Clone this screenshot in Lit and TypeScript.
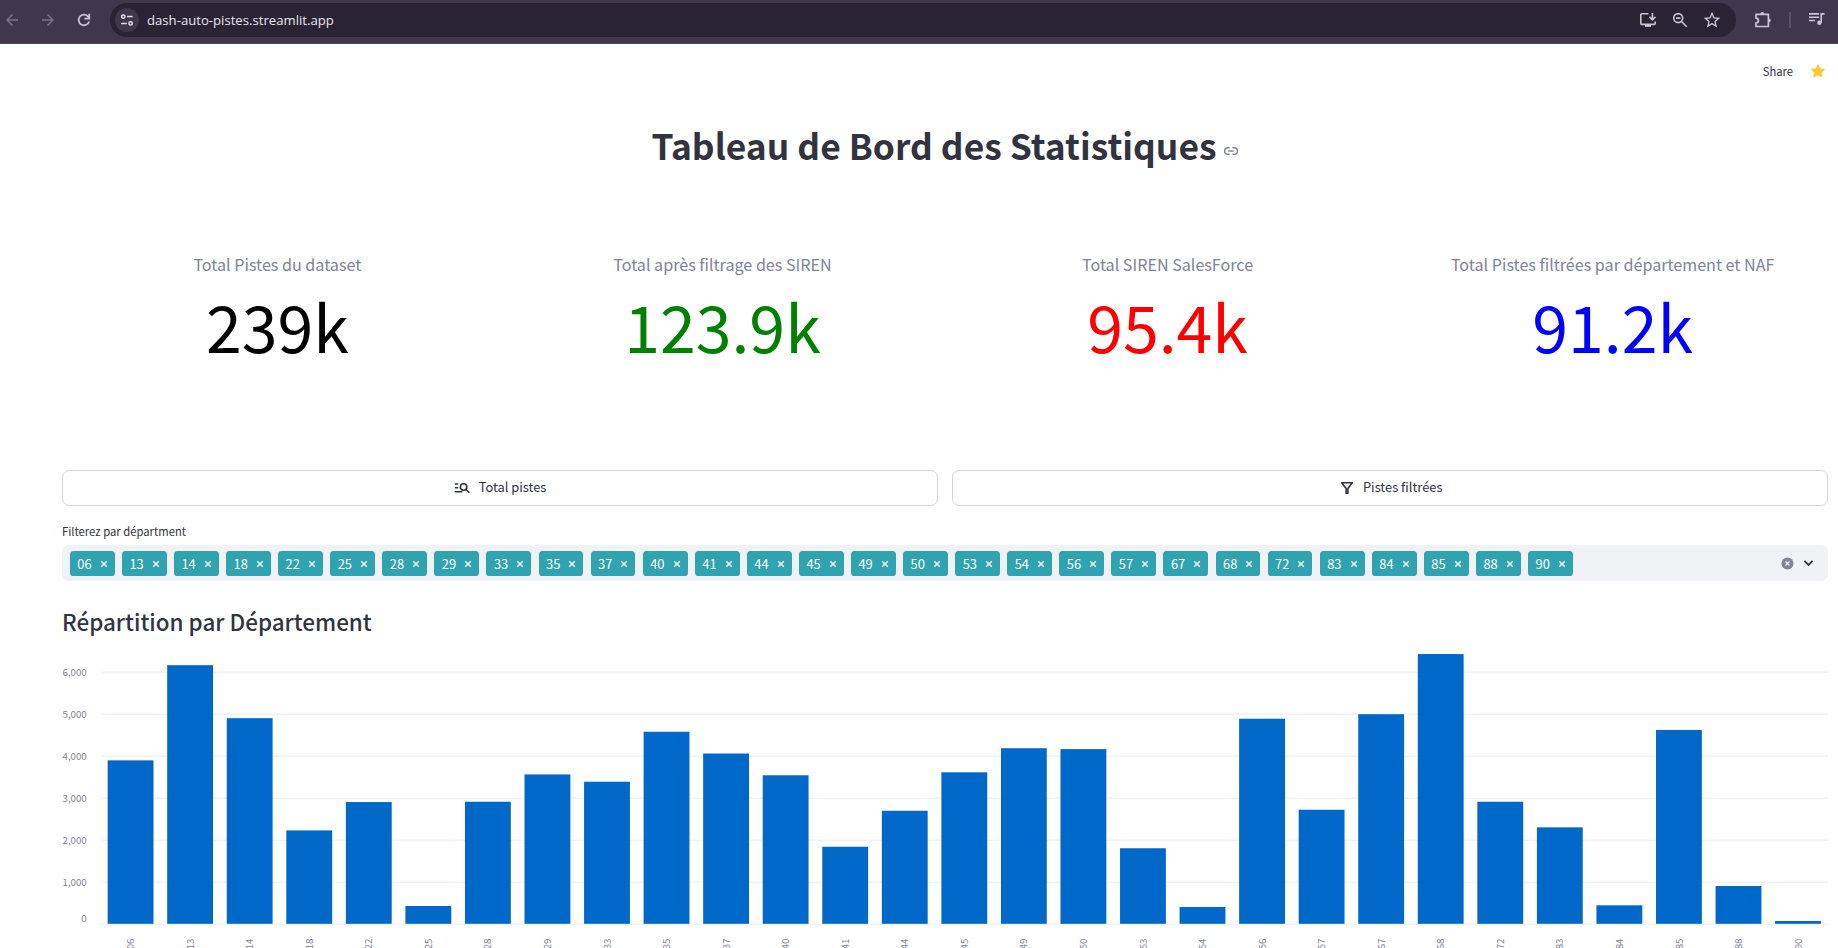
import { LitElement, html, css, svg } from "lit";
import { customElement, property } from "lit/decorators.js";

const DEPARTMENTS: Array<[string, number]> = [
  ["06", 3901], ["13", 6167], ["14", 4905], ["18", 2233], ["22", 2908],
  ["25", 433], ["28", 2916], ["29", 3566], ["33", 3392], ["35", 4582],
  ["37", 4064], ["40", 3546], ["41", 1844], ["44", 2701], ["45", 3617],
  ["49", 4190], ["50", 4169], ["53", 1808], ["54", 409], ["56", 4892],
  ["57", 2725], ["67", 5000], ["68", 6432], ["72", 2916], ["83", 2306],
  ["84", 450], ["85", 4625], ["88", 909], ["90", 77],
];

@customElement("browser-bar")
class BrowserBar extends LitElement {
  static styles = css`
    :host {
      display: flex;
      align-items: flex-start;
      height: 44px;
      box-sizing: border-box;
      padding-top: 3px;
      background: #40374c;
      border-bottom: 1px solid #4b4257;
      color: #cbc2dc;
      font-family: "Open Sans", "Noto Sans", sans-serif;
    }
    svg { display: block; flex: none; }
    .nav {
      display: flex;
      align-items: center;
      width: 110px;
      height: 34px;
      gap: 18px;
      padding-left: 3px;
      box-sizing: border-box;
    }
    .dim { color: #7b7189; }
    .address {
      display: flex;
      align-items: center;
      width: 1626px;
      height: 34px;
      box-sizing: border-box;
      padding: 0 14px 0 5px;
      border-radius: 17px;
      background: #2a2333;
      color: #c9c5cf;
    }
    .site {
      display: grid;
      place-items: center;
      width: 24px;
      height: 24px;
      border-radius: 50%;
      background: #40374c;
      color: #e4dfea;
    }
    .url {
      flex: 1;
      margin-left: 8px;
      color: #e8e4ee;
      font-size: 13.15px;
      line-height: 20px;
    }
    .actions { display: flex; gap: 12px; align-items: center; }
    .tools {
      display: flex;
      align-items: center;
      height: 34px;
      padding-left: 17px;
      gap: 16px;
    }
    .rule { width: 2px; height: 16px; background: #5a5068; }
  `;
  render() {
    return html`
      <div class="nav">
        <svg class="dim" width="18" height="18" viewBox="0 0 24 24" fill="currentColor"><path d="M20 11H7.83l5.59-5.59L12 4l-8 8 8 8 1.41-1.41L7.83 13H20z"/></svg>
        <svg class="dim" width="18" height="18" viewBox="0 0 24 24" fill="currentColor"><path d="M4 13h12.17l-5.59 5.59L12 20l8-8-8-8-1.41 1.41L16.17 11H4z"/></svg>
        <svg width="18" height="18" viewBox="0 0 18 18" fill="none" stroke="currentColor" stroke-width="1.7"><path d="M14.1 10.4A5.3 5.3 0 1 1 12.9 5.4L14.4 7.2M14.3 2.8v4.9H9.4"/></svg>
      </div>
      <div class="address">
        <div class="site">
          <svg width="14" height="14" viewBox="0 0 14 14" fill="none" stroke="currentColor" stroke-width="1.5">
            <circle cx="3.3" cy="3.6" r="1.7"/><path d="M7 3.6h5.6M1.2 10.4h5.6"/><circle cx="10.6" cy="10.4" r="1.7"/>
          </svg>
        </div>
        <div class="url">dash-auto-pistes.streamlit.app</div>
        <div class="actions">
          <svg width="20" height="20" viewBox="0 0 20 20" fill="none" stroke="currentColor" stroke-width="1.6">
            <path d="M10.4 3.8H3.6a.8.8 0 0 0-.8.8v9a.8.8 0 0 0 .8.8h12.8a.8.8 0 0 0 .8-.8v-2.2"/><path d="M14.4 3v6.6M11.4 6.9l3 3 3-3"/><path d="M7 15.8h6" stroke-width="2.2"/>
          </svg>
          <svg width="20" height="20" viewBox="0 0 20 20" fill="none" stroke="currentColor" stroke-width="1.6">
            <circle cx="8.2" cy="8.1" r="4.5"/><path d="M11.5 11.5l5.2 5.2M6 8.1h4.4"/>
          </svg>
          <svg width="20" height="20" viewBox="0 0 24 24" fill="currentColor"><path d="M22 9.24l-7.19-.62L12 2 9.19 8.63 2 9.24l5.46 4.73L5.82 21 12 17.27 18.18 21l-1.63-7.03L22 9.24zM12 15.4l-3.76 2.27 1-4.28-3.32-2.88 4.38-.38L12 6.1l1.71 4.04 4.38.38-3.32 2.88 1 4.28L12 15.4z"/></svg>
        </div>
      </div>
      <div class="tools">
        <svg width="20" height="20" viewBox="0 0 20 20" fill="none" stroke="currentColor" stroke-width="1.7" stroke-linejoin="round">
          <path d="M3 4.3h12.4v12.2H3v-3.6a2.4 2.4 0 0 0 0-4.8z"/><path d="M7.4 4a1.9 1.9 0 0 1 3.8 0zM15.8 8.4a1.9 1.9 0 0 1 0 3.8z" fill="currentColor" stroke="none"/>
        </svg>
        <div class="rule"></div>
        <svg width="20" height="20" viewBox="0 0 20 20" fill="none" stroke="currentColor" stroke-width="1.6">
          <path d="M2 3.9h10M2 7.2h10M2 10.5h6"/><path d="M14.2 12.5V3.9h3.4"/><circle cx="12.4" cy="12.7" r="2.2" fill="currentColor" stroke="none"/>
        </svg>
      </div>`;
  }
}

@customElement("metric-card")
class MetricCard extends LitElement {
  @property() label = "";
  @property() value = "";
  static styles = css`
    :host { display: block; flex: 1; text-align: center; white-space: nowrap; }
    .label { color: #808495; font-size: 16.12px; line-height: 28px; }
    .value { margin-top: 3px; font-size: 64.45px; line-height: 88px; }
  `;
  render() {
    return html`<div class="label">${this.label}</div><div class="value">${this.value}</div>`;
  }
}

@customElement("bar-chart")
class BarChart extends LitElement {
  static styles = css`
    :host { display: block; }
    svg { display: block; }
    .grid { stroke: #e9ebf3; stroke-width: 0.9; }
    .bar { fill: #0068c9; }
    .tick { fill: #808495; font-size: 9.67px; text-anchor: end; }
  `;
  render() {
    const base = 274.2;
    const unit = 0.042;
    const left = 39;
    const step = 1727 / DEPARTMENTS.length;
    const width = 45.85;
    const ticks = [0, 1000, 2000, 3000, 4000, 5000, 6000];
    return html`<svg width="1766" height="298" viewBox="0 0 1766 298">
      ${ticks.map((t) => {
        const y = base - t * unit;
        return svg`<line class="grid" x1=${left} x2="1766" y1=${y} y2=${y}></line>
          <text class="tick" x="24.7" y=${t ? y + 4 : y - 2.4}>${t.toLocaleString("en-US")}</text>`;
      })}
      ${DEPARTMENTS.map(([code, v], i) => {
        const x = left + i * step + (step - width) / 2 - 0.2;
        const c = x + width / 2 + 3.6;
        return svg`<rect class="bar" x=${x} y=${base - v * unit} width=${width} height=${v * unit - 0.4}></rect>
          <text class="tick" x=${c} y="288.6" transform="rotate(-90 ${c} 288.6)">${code}</text>`;
      })}
    </svg>`;
  }
}

@customElement("app-root")
class AppRoot extends LitElement {
  static styles = css`
    :host {
      display: block;
      height: 948px;
      overflow: hidden;
      background: #fff;
      color: #31333f;
      font-family: "Noto Sans CJK JP", "Open Sans", sans-serif;
    }
    svg { display: block; flex: none; }
    .toolbar {
      display: flex;
      justify-content: flex-end;
      align-items: center;
      height: 54px;
      padding-right: 12px;
      gap: 17px;
      font-size: 11.2px;
      line-height: 18px;
    }
    .share { padding-bottom: 1px; }
    .page { padding: 0 10px 0 62px; }
    .title {
      display: flex;
      justify-content: center;
      align-items: center;
      gap: 6px;
      height: 92px;
      margin: 0;
      font-size: 35.4px;
      font-weight: 700;
      line-height: 48px;
    }
    .title span { padding-top: 2px; }
    .title svg { margin-top: 13px; color: #808495; }
    .metrics { display: flex; gap: 14.4px; height: 220px; padding-top: 60px; box-sizing: border-box; }
    .black { color: #000; }
    .green { color: #008000; }
    .red { color: #f00; }
    .blue { color: #00f; }
    .metrics .black, .metrics .green, .metrics .red, .metrics .blue { min-width: 0; }
    .buttons { display: flex; gap: 14.4px; margin-top: 60px; }
    .button {
      flex: 1;
      display: flex;
      justify-content: center;
      align-items: center;
      gap: 7.2px;
      height: 36px;
      box-sizing: border-box;
      border: 1px solid #d6d6d9;
      border-radius: 7.2px;
      font-size: 12.89px;
      line-height: 20px;
    }
    .button span { padding-bottom: 3px; }
    .field { margin-top: 16px; font-size: 11.28px; line-height: 19px; }
    .select {
      display: flex;
      align-items: center;
      height: 36px;
      margin-top: 4px;
      padding: 0 14px 0 7.8px;
      box-sizing: border-box;
      border-radius: 7.2px;
      background: #f0f2f6;
    }
    .chips { flex: 1; display: flex; gap: 7.2px; }
    .chip {
      display: flex;
      align-items: center;
      justify-content: space-between;
      width: 44.9px;
      height: 25px;
      box-sizing: border-box;
      padding: 1px 7px 0 7.5px;
      border-radius: 3.6px;
      background: #30a3b0;
      color: #fff;
      font-size: 12.89px;
      line-height: 24px;
    }
    .controls { display: flex; align-items: center; gap: 9px; }
    .subtitle { margin: 25px 0 0; font-size: 22.45px; font-weight: 500; line-height: 30px; }
    .chart { margin-top: 14px; }
  `;
  render() {
    return html`
      <browser-bar></browser-bar>
      <div class="toolbar">
        <span class="share">Share</span>
        <svg width="16" height="16" viewBox="0 0 16 16" fill="#fbca2c" stroke="#fbca2c" stroke-width="1.3" stroke-linejoin="round"><path d="M8 2l1.8 3.9 4.3.5-3.2 2.9.9 4.3L8 11.5l-3.8 2.1.9-4.3-3.2-2.9 4.3-.5z"/></svg>
      </div>
      <div class="page">
        <h1 class="title">
          <span>Tableau de Bord des Statistiques</span>
          <svg width="16" height="16" viewBox="0 0 16 16" fill="none" stroke="currentColor" stroke-width="1.4"><path d="M6.6 4.7H4.9a3.3 3.3 0 0 0 0 6.6h1.7M9.4 4.7h1.7a3.3 3.3 0 0 1 0 6.6H9.4M5.3 8h5.4"/></svg>
        </h1>
        <div class="metrics">
          <metric-card class="black" label="Total Pistes du dataset" value="239k"></metric-card>
          <metric-card class="green" label="Total après filtrage des SIREN" value="123.9k"></metric-card>
          <metric-card class="red" label="Total SIREN SalesForce" value="95.4k"></metric-card>
          <metric-card class="blue" label="Total Pistes filtrées par département et NAF" value="91.2k"></metric-card>
        </div>
        <div class="buttons">
          <div class="button">
            <svg width="18" height="18" viewBox="0 0 18 18" fill="none" stroke="currentColor" stroke-width="1.6"><path d="M1.8 5h3.4M1.8 8.7h3.4M1.8 12.8h7.6"/><circle cx="10.6" cy="8" r="3.2"/><path d="M12.8 10.2l3.6 3.6"/></svg>
            <span>Total pistes</span>
          </div>
          <div class="button">
            <svg width="18" height="18" viewBox="0 0 18 18" fill="none" stroke="currentColor" stroke-width="1.6" stroke-linejoin="round"><path d="M3.7 3.8h10.6L9.9 9.6v4.7H8.1V9.6z"/></svg>
            <span>Pistes filtrées</span>
          </div>
        </div>
        <div class="field">Filterez par départment</div>
        <div class="select">
          <div class="chips">
            ${DEPARTMENTS.map(([code]) => html`<div class="chip"><span>${code}</span>
              <svg width="8" height="8" viewBox="0 0 8 8" stroke="#fff" stroke-width="1.4"><path d="M1.2 1.2l5.6 5.6M6.8 1.2L1.2 6.8"/></svg></div>`)}
          </div>
          <div class="controls">
            <svg width="13" height="13" viewBox="0 0 13 13"><circle cx="6.5" cy="6.5" r="6" fill="#808495"/><path d="M4.5 4.5l4 4M8.5 4.5l-4 4" stroke="#f0f2f6" stroke-width="1.3"/></svg>
            <svg width="11" height="8" viewBox="0 0 11 8" fill="none" stroke="#31333f" stroke-width="1.8"><path d="M1.4 1.8l4.1 4.1 4.1-4.1"/></svg>
          </div>
        </div>
        <h2 class="subtitle">Répartition par Département</h2>
        <bar-chart class="chart"></bar-chart>
      </div>`;
  }
}
